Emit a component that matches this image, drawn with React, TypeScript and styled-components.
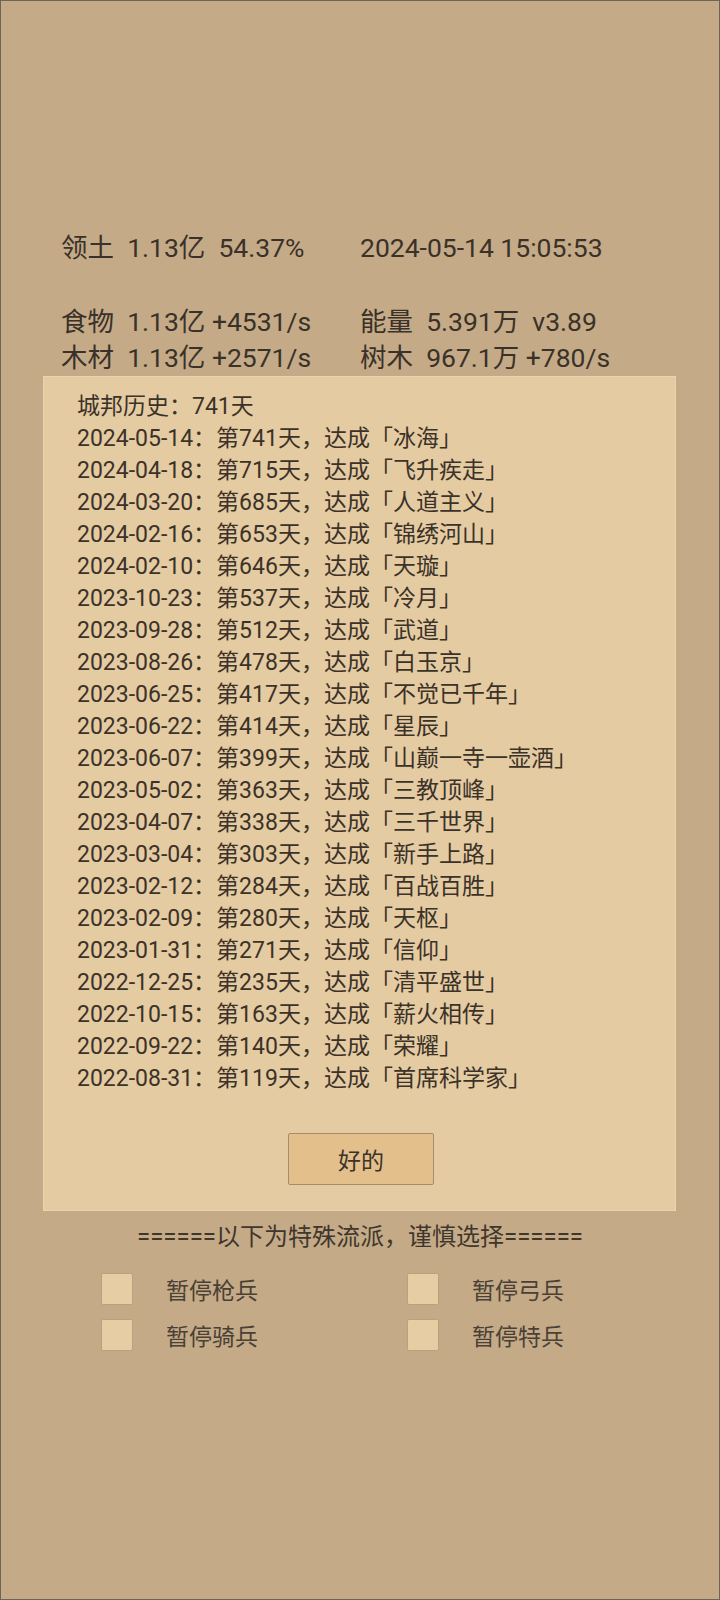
import React from "react";
import styled, { createGlobalStyle } from "styled-components";

const GlobalStyle = createGlobalStyle`
  html, body {
    margin: 0;
    padding: 0;
    background: #c4aa87;
  }
  * {
    box-sizing: border-box;
  }
`;

const Screen = styled.div`
  height: 1600px;
  border: 1px solid #6d6559;
  background: #c4aa87;
  padding-top: 229px;
  font-family: Roboto, "Noto Sans CJK SC", sans-serif;
  color: #3a3129;
`;

const Stats = styled.div`
  display: grid;
  grid-template-columns: 299px 1fr;
  padding-left: 60px;
  font-size: 26.5px;
  line-height: 36px;
  white-space: pre;
`;

const Spacer = styled.div`
  grid-column: 1 / span 2;
  height: 38px;
`;

const Panel = styled.div`
  margin: 0 43px 0 42px;
  background: #e5cba2;
  border: 1px solid #ead4b0;
  padding: 14px 30px 25px 33px;
  display: flex;
  flex-direction: column;
`;

const HistoryList = styled.div`
  font-size: 23px;
  line-height: 32px;
  color: #3b3229;
`;

const Line = styled.div`
  white-space: pre;
`;

const OkButton = styled.button`
  align-self: center;
  margin-top: 38px;
  width: 146px;
  height: 52px;
  background: #e3bf8c;
  border: 1px solid #a48d6c;
  border-radius: 2px;
  font-family: Roboto, "Noto Sans CJK SC", sans-serif;
  font-size: 23px;
  color: #3b3229;
  padding: 0;
`;

const Divider = styled.div`
  margin-top: 10px;
  text-align: center;
  font-size: 24px;
  line-height: 32px;
  color: #3f362c;
`;

const Options = styled.div`
  display: grid;
  grid-template-columns: 306px 1fr;
  padding-left: 100px;
  margin-top: 13px;
`;

const Option = styled.label`
  display: flex;
  align-items: center;
  height: 46px;
  gap: 33px;
  font-size: 23px;
  color: #4a4035;
`;

const Box = styled.span`
  width: 32px;
  height: 32px;
  background: #e6cda4;
  border: 1px solid #baa27f;
  border-radius: 2px;
`;

const history: [string, number, string][] = [
  ["2024-05-14", 741, "冰海"],
  ["2024-04-18", 715, "飞升疾走"],
  ["2024-03-20", 685, "人道主义"],
  ["2024-02-16", 653, "锦绣河山"],
  ["2024-02-10", 646, "天璇"],
  ["2023-10-23", 537, "冷月"],
  ["2023-09-28", 512, "武道"],
  ["2023-08-26", 478, "白玉京"],
  ["2023-06-25", 417, "不觉已千年"],
  ["2023-06-22", 414, "星辰"],
  ["2023-06-07", 399, "山巅一寺一壶酒"],
  ["2023-05-02", 363, "三教顶峰"],
  ["2023-04-07", 338, "三千世界"],
  ["2023-03-04", 303, "新手上路"],
  ["2023-02-12", 284, "百战百胜"],
  ["2023-02-09", 280, "天枢"],
  ["2023-01-31", 271, "信仰"],
  ["2022-12-25", 235, "清平盛世"],
  ["2022-10-15", 163, "薪火相传"],
  ["2022-09-22", 140, "荣耀"],
  ["2022-08-31", 119, "首席科学家"],
];

const options = ["暂停枪兵", "暂停弓兵", "暂停骑兵", "暂停特兵"];

export default function App() {
  return (
    <Screen>
      <GlobalStyle />
      <Stats>
        <div>{"领土  1.13亿  54.37%"}</div>
        <div>{"2024-05-14 15:05:53"}</div>
        <Spacer />
        <div>{"食物  1.13亿 +4531/s"}</div>
        <div>{"能量  5.391万  v3.89"}</div>
        <div>{"木材  1.13亿 +2571/s"}</div>
        <div>{"树木  967.1万 +780/s"}</div>
      </Stats>
      <Panel>
        <HistoryList>
          <Line>{"城邦历史：741天"}</Line>
          {history.map(([date, day, name]) => (
            <Line key={date}>{`${date}：第${day}天，达成「${name}」`}</Line>
          ))}
        </HistoryList>
        <OkButton>好的</OkButton>
      </Panel>
      <Divider>======以下为特殊流派，谨慎选择======</Divider>
      <Options>
        {options.map((label) => (
          <Option key={label}>
            <Box />
            {label}
          </Option>
        ))}
      </Options>
    </Screen>
  );
}
